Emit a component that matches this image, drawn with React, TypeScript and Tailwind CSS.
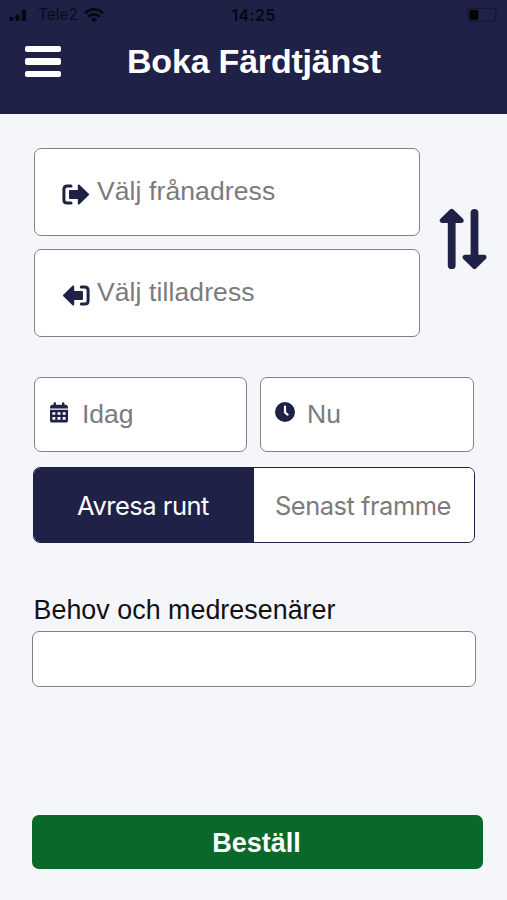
import { useState, type ReactNode } from "react"

type TimeMode = "departure" | "arrival"

interface FieldProps {
  icon: ReactNode
  placeholder: string
  className: string
}

function Field({ icon, placeholder, className }: FieldProps) {
  return (
    <button
      className={`flex items-center rounded-[7px] border border-[#808285] bg-white pb-[2px] text-left text-[26.5px] leading-[30px] text-[#7b7b7b] ${className}`}
    >
      {icon}
      <span className="whitespace-nowrap">{placeholder}</span>
    </button>
  )
}

function StatusBar() {
  return (
    <div className="flex h-[30px] items-center justify-between pl-[9px] pr-[9px] text-[#06070f]">
      <div className="flex w-[180px] items-center">
        <svg className="h-[12px] w-[18px]" viewBox="0 0 18 12" fill="currentColor">
          <rect x="0.5" y="8" width="3.8" height="4" rx="0.8" />
          <rect x="6.5" y="5.5" width="4" height="6.5" rx="0.8" />
          <rect x="12.8" y="0.5" width="4.2" height="11.5" rx="0.8" />
        </svg>
        <span className="ml-[11px] font-[Inter,sans-serif] text-[15.5px] leading-[18px] text-[#0b0c1c]">Tele2</span>
        <svg className="ml-[6px] h-[15px] w-[20px]" viewBox="0 0 20 15" fill="none" stroke="currentColor">
          <path strokeWidth="2.8" d="M1 5.2C6 0.2 14 0.2 19 5.2" />
          <path strokeWidth="2.6" d="M4.3 8.7C7.5 5.6 12.5 5.6 15.7 8.7" />
          <path fill="currentColor" stroke="none" d="M10 14.3L6.8 11.2C8.6 9.6 11.4 9.6 13.2 11.2Z" />
        </svg>
      </div>
      <span className="font-[Inter,sans-serif] text-[16px] font-semibold leading-[18px] tracking-[0.3px]">14:25</span>
      <div className="flex w-[180px] justify-end">
        <svg className="h-[15px] w-[32px]" viewBox="0 0 32 15">
          <rect x="1.7" y="0.4" width="28" height="13" rx="2.5" fill="none" stroke="#16172f" strokeWidth="1.3" />
          <rect x="3.6" y="2.1" width="8.6" height="9.6" rx="1" fill="#020206" />
          <path fill="#16172f" d="M30.6 5Q32 7 30.6 9Z" />
        </svg>
      </div>
    </div>
  )
}

function LeaveIcon() {
  return (
    <svg className="mr-[8px] mt-[6px] h-[21px] w-[27px] shrink-0" viewBox="0 0 27 21" fill="#202147">
      <path fill="none" stroke="#202147" strokeWidth="3" strokeLinecap="round" d="M9 1.9H5.3Q1.9 1.9 1.9 5.3V15.7Q1.9 19.1 5.3 19.1H9" />
      <path strokeLinejoin="round" strokeWidth="2" stroke="#202147" d="M8 7H16.8V1.4L26 10.5L16.8 19.6V14H8Z" />
    </svg>
  )
}

function ArriveIcon() {
  return (
    <svg className="mr-[7px] mt-[6px] h-[21px] w-[27px] shrink-0" viewBox="0 0 27 21" fill="#202147">
      <path fill="none" stroke="#202147" strokeWidth="3" strokeLinecap="round" d="M18.3 1.9H21.7Q25.1 1.9 25.1 5.3V15.7Q25.1 19.1 21.7 19.1H18.3" />
      <path strokeLinejoin="round" strokeWidth="2" stroke="#202147" d="M19 7H10.2V1.4L1 10.5L10.2 19.6V14H19Z" />
    </svg>
  )
}

function SwapIcon() {
  return (
    <svg className="h-[62px] w-[48px]" viewBox="0 0 48 62" fill="#202147" stroke="#202147" strokeLinecap="round" strokeLinejoin="round">
      <path strokeWidth="7.8" d="M12.7 10V57.2" />
      <path strokeWidth="5" d="M12.7 3.4L3.2 12.6H22.2Z" />
      <path strokeWidth="7.8" d="M35.5 4.8V52" />
      <path strokeWidth="5" d="M35.5 58.4L26 49.2H45Z" />
    </svg>
  )
}

function CalendarIcon() {
  return (
    <svg className="mb-[3px] mr-[14px] h-[21px] w-[18px] shrink-0" viewBox="0 0 18 21" fill="#202147">
      <path d="M0 5.8Q0 2.8 2.6 2.8H3.6V1.1Q3.6 0.2 4.8 0.2T6 1.1V2.8H12V1.1Q12 0.2 13.2 0.2T14.4 1.1V2.8H15.4Q18 2.8 18 5.8V6.4H0Z" />
      <path fillRule="evenodd" d="M0 7.8H18V18Q18 20.6 15.6 20.6H2.4Q0 20.6 0 18ZM2.4 10.2V12.7H5.3V10.2ZM7.5 10.2V12.7H10.5V10.2ZM12.7 10.2V12.7H15.6V10.2ZM2.4 15.1V17.7H5.3V15.1ZM7.5 15.1V17.7H10.5V15.1ZM12.7 15.1V17.7H15.6V15.1Z" />
    </svg>
  )
}

function ClockIcon() {
  return (
    <svg className="mb-[4px] mr-[12px] h-[20px] w-[20px] shrink-0" viewBox="0 0 20 20">
      <circle cx="10" cy="10" r="10" fill="#202147" />
      <path fill="none" stroke="#fff" strokeWidth="2.2" strokeLinecap="round" strokeLinejoin="round" d="M10 4.5V10.5L12.6 12.6" />
    </svg>
  )
}

export default function App() {
  const [mode, setMode] = useState<TimeMode>("departure")

  const tab = (value: TimeMode) =>
    `flex-1 whitespace-nowrap pr-[2px] pt-[3px] text-center ${mode === value ? "bg-[#202147] text-white" : "bg-white text-[#7b7b7b]"}`

  return (
    <div className="flex h-[900px] w-[507px] flex-col overflow-hidden bg-[#f4f6fa] font-['Liberation_Sans',sans-serif]">
      <header className="h-[114px] shrink-0 bg-[#202147]">
        <StatusBar />
        <div className="flex h-[63px] items-center pl-[25px]">
          <button aria-label="Meny" className="flex w-[36px] flex-col gap-[6px]">
            <span className="h-[6.5px] w-full rounded-[2px] bg-white" />
            <span className="h-[6.5px] w-full rounded-[2px] bg-white" />
            <span className="h-[6.5px] w-full rounded-[2px] bg-white" />
          </button>
          <h1 className="-mt-[2px] ml-[66px] whitespace-nowrap text-[34px] font-bold leading-[40px] tracking-[-0.2px] text-white">Boka Färdtjänst</h1>
        </div>
      </header>

      <main className="flex flex-1 flex-col pb-[31px] pl-[32px] pr-[24px] pt-[34px]">
        <div className="flex items-center">
          <div className="ml-[2px] flex w-[386px] flex-col gap-[13px]">
            <Field icon={<LeaveIcon />} placeholder="Välj frånadress" className="h-[88px] pl-[27px] tracking-[0.1px]" />
            <Field icon={<ArriveIcon />} placeholder="Välj tilladress" className="h-[88px] pl-[28px] tracking-[0.1px]" />
          </div>
          <button aria-label="Byt riktning" className="-mr-[6px] ml-[19px] mt-[-8px] shrink-0">
            <SwapIcon />
          </button>
        </div>

        <div className="ml-[2px] mt-[40px] flex gap-[13px]">
          <Field icon={<CalendarIcon />} placeholder="Idag" className="h-[75px] w-[213px] pl-[15px]" />
          <Field icon={<ClockIcon />} placeholder="Nu" className="h-[75px] w-[214px] pl-[14px]" />
        </div>

        <div className="ml-px mt-[15px] flex h-[76px] w-[442px] overflow-hidden rounded-[7px] border-[1.5px] border-[#202147] font-[Inter,sans-serif] text-[25.5px] tracking-[-0.5px]">
          <button className={tab("departure")} onClick={() => setMode("departure")}>
            Avresa runt
          </button>
          <button className={tab("arrival")} onClick={() => setMode("arrival")}>
            Senast framme
          </button>
        </div>

        <label htmlFor="needs" className="ml-[1.5px] mt-[51px] whitespace-nowrap text-[26.8px] leading-[32px] tracking-[0.05px] text-[#111]">
          Behov och medresenärer
        </label>
        <input id="needs" className="mt-[5px] h-[56px] w-[444px] rounded-[7px] border border-[#808285] bg-white px-3" />

        <button className="mt-auto h-[54px] w-[451px] rounded-[7px] bg-[#0a682b] pr-[2px] pt-px text-[27px] font-bold leading-[30px] text-white">
          Beställ
        </button>
      </main>
    </div>
  )
}
